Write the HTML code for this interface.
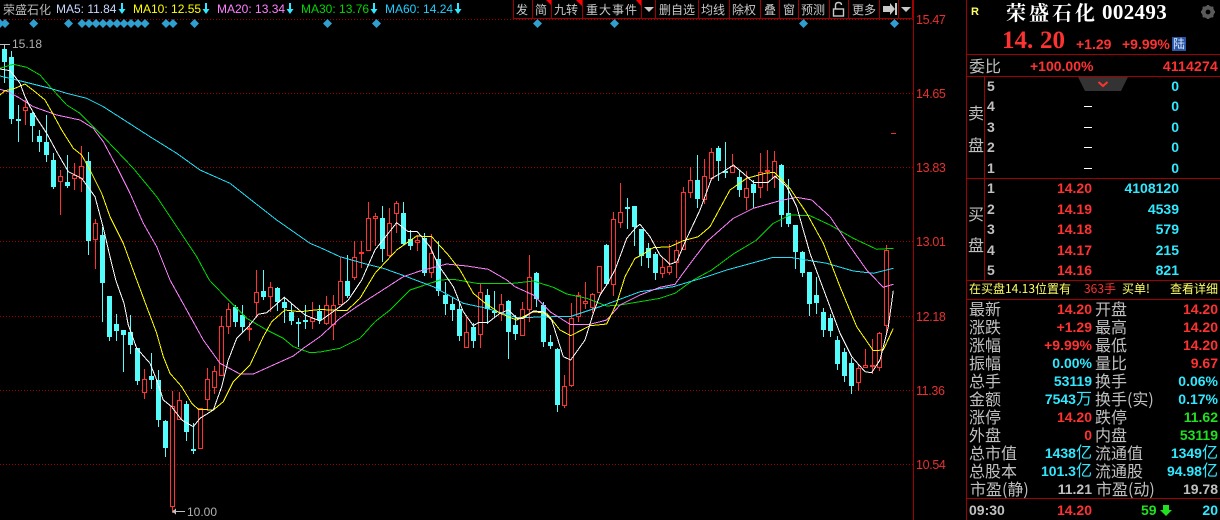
<!DOCTYPE html>
<html><head><meta charset="utf-8">
<style>
html,body{margin:0;padding:0;background:#000;width:1220px;height:520px;overflow:hidden}
#r{position:relative;width:1220px;height:520px;background:#000;overflow:hidden;font-family:"Liberation Sans","WenQuanYi Zen Hei",sans-serif}
#r span{position:absolute;white-space:pre;line-height:18px;height:18px}
#r span.u{position:static;font:16px/14px "WenQuanYi Zen Hei",sans-serif;height:auto}
svg{position:absolute;left:0;top:0}
.c{font-family:"WenQuanYi Zen Hei","Noto Sans CJK SC",sans-serif;font-size:16px;color:#c0c0c0;margin-top:-1px}
.t{font-family:"WenQuanYi Zen Hei","Noto Sans CJK SC",sans-serif;font-size:12px;color:#c8c8c8;top:1px}
.n{font-weight:bold;font-size:14px}
.ax{font-size:12.5px;letter-spacing:-.35px;color:#e83030;left:916px;margin-top:1px}
.m{font-size:12px;top:0}
.rd{color:#ff3232}.cy{color:#30e8ff}.gr{color:#20e020}.w{color:#c0c0c0}
.y{font-family:"WenQuanYi Zen Hei","Noto Sans CJK SC",sans-serif;font-size:12px;color:#ffff66;top:280px}
</style></head><body><div id="r">
<svg width="1220" height="520" shape-rendering="crispEdges" id="s">
<g stroke="#a00000" stroke-width="1" stroke-dasharray="1 2" fill="none">
<path d="M0 19.5H913M0 93.5H913M0 167.5H913M0 241.5H913M0 316.5H913M0 390.5H913M0 464.5H913"/>
</g>
<g id="cd"></g>
<g fill="none" stroke-width="1" shape-rendering="crispEdges">
<polyline stroke="#00d800" points="0,68.3 13.3,64.3 26.7,67.3 40,75 50,86.7 66.7,105 80,113.3 103.3,136.7 133.3,168.3 156.7,196.7 176.7,226.7 196.7,256.7 209.3,280 226.7,298.3 246.7,318.3 266.7,330 283.3,338.3 293.3,346.7 310,352.7 320,352 340,348.3 360,338.3 375,321.7 390,310 410,290 430,283.3 440,280 453.3,279.3 476.7,283.3 513.3,283.3 533.3,281 553.3,287.3 566.7,294 586.7,298.3 606.7,306 620,305 640,301.7 660,298.3 675,293.3 693.3,280 711.7,270 733.3,254 756.7,240 773.3,223.3 790,215 810,215.7 830,225 853.3,238.3 876.7,249.3 893.3,248.3"/>
<polyline stroke="#20e0f8" points="0,76 16.7,80 50,88.3 66.7,93.3 86.7,98.3 103.3,106.7 126.7,121.7 150,136.7 176.7,153.3 200,170 230,183.3 253.3,201.7 276.7,220 310,243.3 320,247.5 340,256.7 363.3,263.3 383.3,268.3 406.7,276.7 433.3,286.7 463.3,303.3 486.7,308.3 516.7,317.7 553.3,316.7 570,316.7 600,306.7 640,291.7 673.3,286.7 706.7,276.7 726.7,270 773.3,257.3 790,257.3 826.7,263.3 853.3,271 873.3,273.3 893.3,268.3"/>
<polyline stroke="#ff80ff" points="0,89.3 8.3,91.7 20,98.3 33.3,106.7 56.7,115 80,120 93.3,128.3 103.3,141.7 116.7,166.7 130,193.3 143.3,223.3 156.7,246.7 170,280 186.7,310 203.3,340 220,363.3 240,374 253.3,374 273.3,365 293.3,356 303.3,348.3 320,336.7 340,318.3 356.7,306.7 380,291.7 403.3,276.7 420,271 446.7,264 466.7,266 488.3,269.3 506.7,280 515,286.7 533.3,295 550,311.7 570,324.3 590,324.3 606.7,320 620,305 640,295 660,287.3 675,284.3 686.7,268.3 706.7,241.7 733.3,218.3 753.3,208.3 780,200.7 796.7,197.3 811.7,200 830,216.7 846.7,241.7 866.7,270 883.3,287.3 893.3,284.3"/>
<polyline stroke="#ffff00" points="0,95 5,90.7 15,88.3 25,84 35,91.7 45,100 51.7,111.7 61.7,130 73.3,148.3 81.7,155 91.7,173.3 101.7,193.3 110,216.7 123.3,243.3 136.7,280 146.7,306.7 156.7,333.3 163.3,356.7 170,373.3 181.7,386.7 191.7,403.3 198.3,409.3 213.3,410 223.3,401.7 233.3,381.7 250,365 263.3,336.7 271.7,321.7 285,310 300,311.7 320,309.5 346.7,310.7 360,298.3 375,273.3 396.7,250 416.7,236 431.7,236.7 448.3,255 460,270 473.3,293.3 483.3,301.7 500,313.3 516.7,320 533.3,311.7 546.7,313.3 560,330 570.7,335.7 590,325.7 606.7,324 616.7,303.3 625,276.7 635,258.3 640,256 653.3,247.7 670,246.7 683.3,240.7 698.3,236.7 710,226.7 730,190 746.7,178.3 765,173.3 774.3,172.3 790,188.3 806.7,213.3 823.3,243.3 840,286.7 856.7,326.7 873.3,350.7 883.3,350 893.3,328.3"/>
<polyline stroke="#ffffff" points="0,69 10,70.7 15,76.7 20,83.3 25,96.7 30,106.7 36.7,118.3 46.7,133.3 56.7,151.7 68.3,171.7 81.7,178.3 95,196.7 103,226.7 110,256.7 115.7,280 124,303.3 128.3,325 136.7,348.3 150,363.3 156.7,380 163.3,400 171.7,406.7 181.7,420 193.3,426.7 200,418.3 213.3,410 221.7,386.7 228.3,360 236.7,338.3 248.3,326.7 258.3,314.3 266.7,312.7 284.3,297.3 293.3,305 305,315 320,321 340,306.7 348.3,300 361.7,280 375,250 396.7,222.7 408.3,231.7 417.3,231.7 430,246.7 438.3,265 453.3,286.7 463.3,311.7 473.3,325.7 478.3,322.7 488.3,322.3 500,313.3 508.3,310 516.7,318.3 523.3,318.3 533.3,311 543.3,311.7 551.7,320 563.3,356.7 570.7,360 585,340 593.3,313.3 600,295 606.7,285 615,270 626.7,238.3 636.7,226.7 640,224.3 650,236.7 660,255 670,264.3 676.7,261.7 686.7,238.3 700,210 711.7,178.3 723.3,171.7 733.3,165 743.3,173.3 753.3,182.3 768.3,182.3 775,176 786.7,186.7 796.7,206.7 803.3,230 810,253.3 820,280 830,306.7 840,333.3 851.7,356.7 865,371.7 871.7,372.7 880,360 888.3,326.7 893.3,290.7"/>
</g>
<path d="M891 133.5H896" stroke="#e83030" fill="none"/>
<path d="M0 44.5H10M4.5 44V48" stroke="#c0c0c0" fill="none"/>
<path d="M175 511.5H185" stroke="#c0c0c0" fill="none"/>
<path d="M172 511.5L176 508.5V514.5Z" fill="#c0c0c0"/>
<g fill="#2f9fd0" shape-rendering="auto" id="dm"></g>
<path d="M913.5 0V520" stroke="#a00000" fill="none"/>
<g stroke="#a00000" fill="none">
<path d="M513.5 0V18.5H912.5M532.5 0V18M551.5 0V18M582.5 0V18M641.5 0V18M655.5 0V18M698.5 0V18M729.5 0V18M760.5 0V18M779.5 0V18M798.5 0V18M829.5 0V18M848.5 0V18M879.5 0V18M898.5 0V18M912.5 0V18"/>
<path d="M966.5 0V520M966 54.5H1220M966 76.5H1220M966 178.5H1220M966 280.5H1220M966 299.5H1220M966 498.5H1220M984.5 77V280"/>
</g>
<g fill="#ff0000" shape-rendering="auto">
<path d="M546 0H551V5Z"/><path d="M576 0H582V6Z"/><path d="M636 0H641V6Z"/>
</g>
<g fill="#c8c8c8" shape-rendering="auto">
<path d="M644 7H654L649 12Z"/>
<path d="M901 7H911L906 12Z"/>
<path d="M883 6H890V3L895 9L890 15V12H883Z"/>
<rect x="895" y="3" width="2" height="12"/>
</g>
<g fill="none" stroke="#c8c8c8" stroke-width="1.4" shape-rendering="auto">
<rect x="833.5" y="9" width="10" height="7"/>
<path d="M835.5 9V5.5Q835.5 2.5 838.5 2.5Q841.5 2.5 841.5 5"/>
</g>
<g fill="#30e8ff" id="ar" shape-rendering="auto"></g>
<path d="M1078 77H1128L1121 91H1085Z" fill="#333" shape-rendering="auto"/>
<path d="M1098.5 82L1103 86L1107.5 82" stroke="#ff3232" stroke-width="2" fill="none" shape-rendering="auto"/>
<path d="M1084 106.5H1092M1084 127.5H1092M1084 147.5H1092M1084 168.5H1092" stroke="#fff" fill="none"/>
<rect x="1172" y="37" width="14" height="14" fill="#2a55a5"/>
<path d="M1163 505H1169V510H1172L1166 516L1160 510H1163Z" fill="#20e020" shape-rendering="auto"/>
<g shape-rendering="auto"><circle cx="1208" cy="12" r="4.6" fill="none" stroke="#5a5a5a" stroke-width="3.4"/>
<path d="M1208 5V19M1201 12H1215M1203 7L1213 17M1213 7L1203 17" stroke="#5a5a5a" stroke-width="2.4"/><circle cx="1208" cy="12" r="2.4" fill="#000"/></g>
</svg>

<span class="t" style="left:3px;color:#b8b8b8">荣盛石化</span>
<span class="m" style="left:56px;color:#c8d8ff">MA5: 11.84</span>
<span class="m" style="left:133px;color:#ffff00">MA10: 12.55</span>
<span class="m" style="left:217px;color:#ff80ff">MA20: 13.34</span>
<span class="m" style="left:301px;color:#00d800">MA30: 13.76</span>
<span class="m" style="left:385px;color:#20d0ff">MA60: 14.24</span>

<span class="t" style="left:516px">发</span><span class="t" style="left:535px">简</span><span class="t" style="left:554px">九转</span>
<span class="t" style="left:586px;letter-spacing:1px">重大事件</span>
<span class="t" style="left:659px">删自选</span><span class="t" style="left:701px">均线</span><span class="t" style="left:732px">除权</span>
<span class="t" style="left:764px">叠</span><span class="t" style="left:783px">窗</span><span class="t" style="left:801px">预测</span><span class="t" style="left:852px">更多</span>

<span class="ax" style="top:10px">15.47</span><span class="ax" style="top:84px">14.65</span><span class="ax" style="top:158px">13.83</span><span class="ax" style="top:232px">13.01</span><span class="ax" style="top:307px">12.18</span><span class="ax" style="top:381px">11.36</span><span class="ax" style="top:455px">10.54</span>
<span style="left:12px;top:35px;font-size:12px;color:#b0b0b0">15.18</span>
<span style="left:187px;top:503px;font-size:12px;color:#b0b0b0">10.00</span>

<span style="left:971px;top:3px;font:bold 11px/18px 'Liberation Sans';color:#ffff66">R</span>
<span style="left:1006px;top:3px;font:bold 20px/18px 'Noto Serif CJK SC','Liberation Serif',serif;letter-spacing:3px;color:#fff">荣盛石化</span>
<span style="left:1102px;top:3px;font:bold 21px/18px 'Liberation Serif',serif;letter-spacing:.35px;color:#fff">002493</span>
<span style="left:1002px;top:32px;font:bold 25px/18px 'Liberation Serif',serif;color:#ff3232">14.</span>
<span style="left:1040px;top:32px;font:bold 25px/18px 'Liberation Serif',serif;color:#ff3232">20</span>
<span class="n rd" style="left:1076px;top:35px">+1.29</span>
<span class="n rd" style="left:1122px;top:35px">+9.99%</span>
<span style="left:1173px;top:35px;font:12px/18px 'WenQuanYi Zen Hei',sans-serif;color:#d8e8ff">陆</span>

<span class="c" style="left:969px;top:57px">委比</span>
<span class="n rd" style="left:1030px;top:57px">+100.00%</span>
<span class="n rd" style="right:2px;top:57px;letter-spacing:.2px">4114274</span>

<span class="c" style="left:968px;top:104px">卖</span><span class="c" style="left:968px;top:136px">盘</span>
<span class="c" style="left:968px;top:205px">买</span><span class="c" style="left:968px;top:236px">盘</span>

<span class="n w" style="left:987px;top:77px">5</span><span class="n w" style="left:987px;top:97px">4</span><span class="n w" style="left:987px;top:118px">3</span><span class="n w" style="left:987px;top:138px">2</span><span class="n w" style="left:987px;top:159px">1</span>
<span class="n cy" style="right:41px;top:77px">0</span><span class="n cy" style="right:41px;top:97px">0</span><span class="n cy" style="right:41px;top:118px">0</span><span class="n cy" style="right:41px;top:138px">0</span><span class="n cy" style="right:41px;top:159px">0</span>

<span class="n w" style="left:987px;top:179px">1</span><span class="n w" style="left:987px;top:200px">2</span><span class="n w" style="left:987px;top:220px">3</span><span class="n w" style="left:987px;top:241px">4</span><span class="n w" style="left:987px;top:261px">5</span>
<span class="n rd" style="right:128px;top:179px">14.20</span><span class="n rd" style="right:128px;top:200px">14.19</span><span class="n rd" style="right:128px;top:220px">14.18</span><span class="n rd" style="right:128px;top:241px">14.17</span><span class="n rd" style="right:128px;top:261px">14.16</span>
<span class="n cy" style="right:41px;top:179px">4108120</span><span class="n cy" style="right:41px;top:200px">4539</span><span class="n cy" style="right:41px;top:220px">579</span><span class="n cy" style="right:41px;top:241px">215</span><span class="n cy" style="right:41px;top:261px">821</span>

<span class="y" style="left:969px">在买盘14.13位置有</span>
<span class="y" style="left:1084px;color:#ff3232">363手</span>
<span class="y" style="left:1122px">买单!</span>
<span class="y" style="left:1170px">查看详细</span>

<span class="c" style="left:969px;top:300px">最新</span><span class="n rd" style="right:128px;top:300px">14.20</span><span class="c" style="left:1095px;top:300px">开盘</span><span class="n rd" style="right:2px;top:300px">14.20</span>
<span class="c" style="left:969px;top:318px">涨跌</span><span class="n rd" style="right:128px;top:318px">+1.29</span><span class="c" style="left:1095px;top:318px">最高</span><span class="n rd" style="right:2px;top:318px">14.20</span>
<span class="c" style="left:969px;top:336px">涨幅</span><span class="n rd" style="right:128px;top:336px">+9.99%</span><span class="c" style="left:1095px;top:336px">最低</span><span class="n rd" style="right:2px;top:336px">14.20</span>
<span class="c" style="left:969px;top:354px">振幅</span><span class="n cy" style="right:128px;top:354px">0.00%</span><span class="c" style="left:1095px;top:354px">量比</span><span class="n rd" style="right:2px;top:354px">9.67</span>
<span class="c" style="left:969px;top:372px">总手</span><span class="n cy" style="right:128px;top:372px">53119</span><span class="c" style="left:1095px;top:372px">换手</span><span class="n cy" style="right:2px;top:372px">0.06%</span>
<span class="c" style="left:969px;top:390px">金额</span><span class="n cy" style="right:128px;top:390px">7543<span class="u">万</span></span><span class="c" style="left:1095px;top:390px">换手(实)</span><span class="n cy" style="right:2px;top:390px">0.17%</span>
<span class="c" style="left:969px;top:408px">涨停</span><span class="n rd" style="right:128px;top:408px">14.20</span><span class="c" style="left:1095px;top:408px">跌停</span><span class="n gr" style="right:2px;top:408px">11.62</span>
<span class="c" style="left:969px;top:426px">外盘</span><span class="n rd" style="right:128px;top:426px">0</span><span class="c" style="left:1095px;top:426px">内盘</span><span class="n gr" style="right:2px;top:426px">53119</span>
<span class="c" style="left:969px;top:444px">总市值</span><span class="n cy" style="right:128px;top:444px">1438<span class="u">亿</span></span><span class="c" style="left:1095px;top:444px">流通值</span><span class="n cy" style="right:2px;top:444px">1349<span class="u">亿</span></span>
<span class="c" style="left:969px;top:462px">总股本</span><span class="n cy" style="right:128px;top:462px">101.3<span class="u">亿</span></span><span class="c" style="left:1095px;top:462px">流通股</span><span class="n cy" style="right:2px;top:462px">94.98<span class="u">亿</span></span>
<span class="c" style="left:970px;top:480px">市盈(静)</span><span class="n w" style="right:128px;top:480px">11.21</span><span class="c" style="left:1096px;top:480px">市盈(动)</span><span class="n w" style="right:2px;top:480px">19.78</span>

<span class="n w" style="left:969px;top:501px">09:30</span>
<span class="n rd" style="right:128px;top:501px">14.20</span>
<span class="n gr" style="left:1141px;top:501px">59</span>
<span class="n cy" style="right:2px;top:501px">20</span>
</div>
<script>
var D=[[45,49,62,82,0],[51,57,119,123,0],[105,119,121,141,0],[100,107,110,124,1],[112,113,126,141,0],[130,136,142,151,0],[115,142,155,161,0],[153,160,187,188,0],[170,176,181,214,1],[155,182,186,187,0],[163,175,178,189,1],[146,166,178,191,1],[152,161,241,254,0],[219,223,239,268,1],[227,235,283,321,0],
[296,296,337,340,0],[314,324,331,340,0],[330,330,335,371,0],[315,332,345,353,0],[348,348,381,384,0],[369,379,392,398,1],[353,376,380,388,0],[370,380,420,426,0],[420,421,448,456,0],[391,406,506,512,1],[392,400,419,419,1],[401,404,432,440,0],[423,449,450,453,0],[408,408,448,448,1],[368,379,399,410,1],[366,371,387,393,1],[316,326,375,375,1],[303,309,326,333,1],[305,307,322,326,0],[305,315,327,332,0],[322,328,329,340,1],[270,292,302,317,1],[270,291,297,299,0],[282,287,296,311,1],[287,288,302,310,0],[298,302,308,322,0],[304,312,321,324,0],[318,322,323,346,0],[305,320,321,328,0],[302,318,321,328,1],[305,311,320,323,0],
[296,305,323,324,1],[295,305,324,339,1],[257,281,304,304,1],[255,281,296,297,0],[241,257,277,279,1],[241,252,253,267,1],[202,218,250,250,1],[213,216,218,245,1],[206,218,249,261,0],[208,223,255,257,1],[201,203,213,232,1],[202,213,244,244,0],[230,239,246,249,0],[235,240,242,250,1],[233,238,273,275,0],[234,253,272,277,1],[241,259,291,295,0],[282,295,304,314,0],[297,304,310,320,0],[302,309,336,340,0],[317,332,347,347,1],[323,327,341,347,0],[283,292,334,347,1],[289,295,309,323,0],[291,311,312,317,0],[294,304,313,320,1],[300,301,332,358,0],[315,325,334,339,0],[302,309,335,335,1],[255,277,309,321,1],[272,273,299,306,0],[302,305,342,346,0],[335,342,346,348,0],[348,349,405,411,0],[375,386,405,407,1],[303,318,385,386,1],[292,295,316,321,1],[282,301,303,308,1],[293,294,307,312,1],[266,266,292,292,1],[244,245,284,285,0],[212,219,284,295,1],[183,212,222,227,1],[198,207,208,228,0],[206,206,227,245,0],
[229,229,256,265,0],[243,248,258,267,0],[252,254,273,279,0],[257,267,273,277,1],[244,266,272,274,1],[240,250,262,277,1],[187,192,249,249,1],[167,180,192,197,1],[155,180,199,207,0],[159,176,199,203,1],[148,152,178,178,1],[146,148,161,180,0],[142,171,172,177,0],[154,166,172,172,1],[170,177,190,196,0],[171,188,197,209,1],[180,184,193,207,0],[153,172,187,197,1],[150,170,171,190,1],[151,161,177,187,1],[164,165,215,226,0],[179,213,224,226,0],[225,225,252,268,0],[251,252,273,276,0],[272,272,304,315,0],[277,295,303,313,0],[308,312,330,336,0],[314,318,331,336,0],[336,340,364,369,0],[348,352,376,381,0],[358,363,386,393,0],[364,368,382,390,1],[349,365,367,367,1],[339,365,366,373,1],[332,333,367,370,1],[245,250,325,333,1]];
var R='#ff3232',C='#54fcfc',h='';
for(var i=0;i<D.length;i++){var d=D[i],x=4+7*i,col=d[4]?R:C;
h+='<rect x="'+x+'" y="'+d[0]+'" width="1" height="'+(d[3]-d[0]+1)+'" fill="'+col+'"/>';
if(d[4]){h+='<rect x="'+(x-1.5)+'" y="'+(d[1]+.5)+'" width="4" height="'+Math.max(1,d[2]-d[1])+'" fill="#000" stroke="'+R+'"/>';}
else{h+='<rect x="'+(x-2)+'" y="'+d[1]+'" width="5" height="'+Math.max(2,d[2]-d[1])+'" fill="'+C+'"/>';}}
document.getElementById('cd').innerHTML=h;
var X=[0,5,33.7,68.5,82,89,96,103,110,117,124,131,138,145,166,173,194.5,327.5,376.5,537.5,614.5,803.5,894.5],m='';
for(var j=0;j<X.length;j++){var a=X[j];m+='<path d="M'+(a-4.5)+' 23.5L'+a+' 19L'+(a+4.5)+' 23.5L'+a+' 28Z"/>';}
document.getElementById('dm').innerHTML=m;
var A=[122,206,290,374,458],n='';
for(var k=0;k<A.length;k++){var b=A[k];n+='<path d="M'+(b-1)+' 3H'+(b+1)+'V9H'+(b+3.5)+'L'+b+' 14L'+(b-3.5)+' 9H'+(b-1)+'Z"/>';}
document.getElementById('ar').innerHTML=n;
</script>
</body></html>
